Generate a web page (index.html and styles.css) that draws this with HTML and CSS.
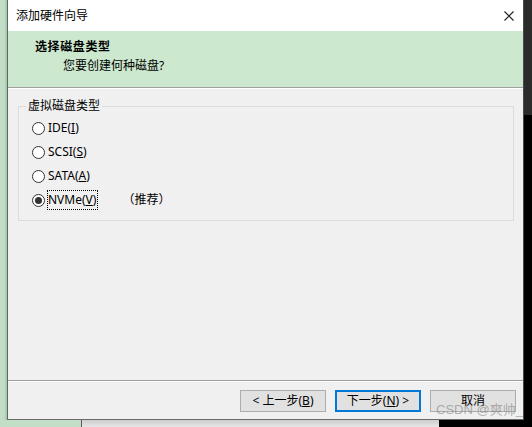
FILE: index.html
```html
<!DOCTYPE html>
<html lang="zh-CN">
<head>
<meta charset="utf-8">
<title>添加硬件向导</title>
<link rel="stylesheet" href="styles.css">
</head>
<body>
<div class="screen">
  <div class="top">
    <div class="bg-left"></div>
    <div class="window">
      <div class="titlebar">
        <span class="title">添加硬件向导</span>
        <svg class="close" width="10" height="10" viewBox="0 0 10 10"><path d="M0.5 0.5 L9.5 9.5 M9.5 0.5 L0.5 9.5" stroke="#1a1a1a" stroke-width="1.1" fill="none"/></svg>
      </div>
      <div class="header">
        <div class="h-title">选择磁盘类型</div>
        <div class="h-sub">您要创建何种磁盘?</div>
      </div>
      <div class="content">
        <fieldset class="group">
          <legend>虚拟磁盘类型</legend>
          <div class="radio-row"><span class="radio"></span><span class="label">IDE(<u>I</u>)</span></div>
          <div class="radio-row"><span class="radio"></span><span class="label">SCSI(<u>S</u>)</span></div>
          <div class="radio-row"><span class="radio"></span><span class="label">SATA(<u>A</u>)</span></div>
          <div class="radio-row"><span class="radio checked"></span><span class="label focus">NVMe(<u>V</u>)</span><span class="note">（推荐）</span></div>
        </fieldset>
      </div>
      <div class="footer">
        <button class="btn">&lt; 上一步(<u>B</u>)</button>
        <button class="btn default">下一步(<u>N</u>) &gt;</button>
        <button class="btn">取消</button>
      </div>
    </div>
    <div class="bg-right"></div>
  </div>
  <div class="bottom">
    <div class="b-green"></div>
    <div class="b-gray"></div>
    <div class="b-black"></div>
  </div>
  <div class="watermark">CSDN @爽帅_</div>
</div>
</body>
</html>
```
FILE: styles.css
```css
* { box-sizing: border-box; }
html, body { margin: 0; padding: 0; }
body {
  width: 532px;
  height: 427px;
  overflow: hidden;
  font-family: "Noto Sans", "Noto Sans CJK SC", sans-serif;
  font-size: 12px;
  color: #000;
}
.screen {
  position: relative;
  width: 532px;
  height: 427px;
  display: flex;
  flex-direction: column;
}
.top {
  display: flex;
  height: 420px;
}
.bg-left {
  width: 7px;
  background: linear-gradient(to right, #c4dfc7 0, #c0dbc3 5px, #a9c4ac 6px, #a9c4ac 7px);
}
.bg-right {
  width: 8px;
  background: linear-gradient(#2b2b2b 0, #2b2b2b 115px, #000 115px);
}
.window {
  width: 517px;
  height: 420px;
  border-left: 1px solid #5d6b5e;
  border-right: 1px solid #4a4a4a;
  border-bottom: 1px solid #6a6a6a;
  display: flex;
  flex-direction: column;
  background: #f0f0f0;
}
.titlebar {
  height: 31px;
  background: #fff;
  display: flex;
  align-items: center;
  justify-content: space-between;
  padding-left: 8px;
  padding-right: 9px;
}
.title {
  line-height: 16px;
  color: #000;
}
.close { display: block; }
.header {
  height: 57px;
  background: #cce8cf;
  border-bottom: 1px solid #a0a0a0;
  padding: 8px 0 0 27px;
}
.h-title {
  font-weight: bold;
  line-height: 16px;
  letter-spacing: 0.6px;
}
.h-sub {
  line-height: 16px;
  margin-top: 3px;
  margin-left: 28px;
}
.content {
  flex: 1;
  border-top: 1px solid #fff;
  padding: 9px 9px 0 10px;
}
.group {
  margin: 0;
  border: 1px solid #dcdcdc;
  padding: 2px 0 8px 0;
  min-width: 0;
}
.group legend {
  margin-left: 7px;
  padding: 0 2px;
  line-height: 16px;
}
.radio-row {
  height: 24px;
  display: flex;
  align-items: center;
  padding-left: 13px;
}
.radio {
  width: 13px;
  height: 13px;
  border: 1px solid #333;
  border-radius: 50%;
  background: #fff;
  display: flex;
  align-items: center;
  justify-content: center;
  flex: none;
}
.radio.checked::after {
  content: "";
  width: 7px;
  height: 7px;
  border-radius: 50%;
  background: #333;
}
.label {
  margin-left: 2px;
  border: 1px solid transparent;
  line-height: 18px;
}
.label.focus {
  border: 1px dotted #000;
  padding-right: 1px;
}
.note {
  margin-left: 24px;
  line-height: 18px;
}
.footer {
  height: 39px;
  border-top: 1px solid #a0a0a0;
  box-shadow: inset 0 1px 0 #fff;
  display: flex;
  justify-content: flex-end;
  align-items: flex-start;
  gap: 9px;
  padding: 9px 7px 0 0;
}
.btn {
  width: 86px;
  height: 22px;
  padding: 0;
  margin: 0;
  background: #e1e1e1;
  border: 1px solid #adadad;
  font-family: "Noto Sans", "Noto Sans CJK SC", sans-serif;
  font-size: 12px;
  line-height: 18px;
  color: #000;
}
.btn.default {
  border: 2px solid #0078d7;
}
.bottom {
  display: flex;
  height: 7px;
}
.b-green {
  width: 82px;
  background: #c3dec6;
  border-right: 1px solid #5a5a5a;
}
.b-gray {
  width: 357px;
  background: linear-gradient(#cdcdcd, #e6e6e6);
}
.b-black {
  flex: 1;
  background: #000;
}
.watermark {
  position: absolute;
  left: 436px;
  top: 402px;
  font-size: 13px;
  line-height: 16px;
  color: rgba(120, 120, 120, 0.55);
  font-family: "Liberation Sans", "Noto Sans CJK SC", sans-serif;
  white-space: nowrap;
}
```
